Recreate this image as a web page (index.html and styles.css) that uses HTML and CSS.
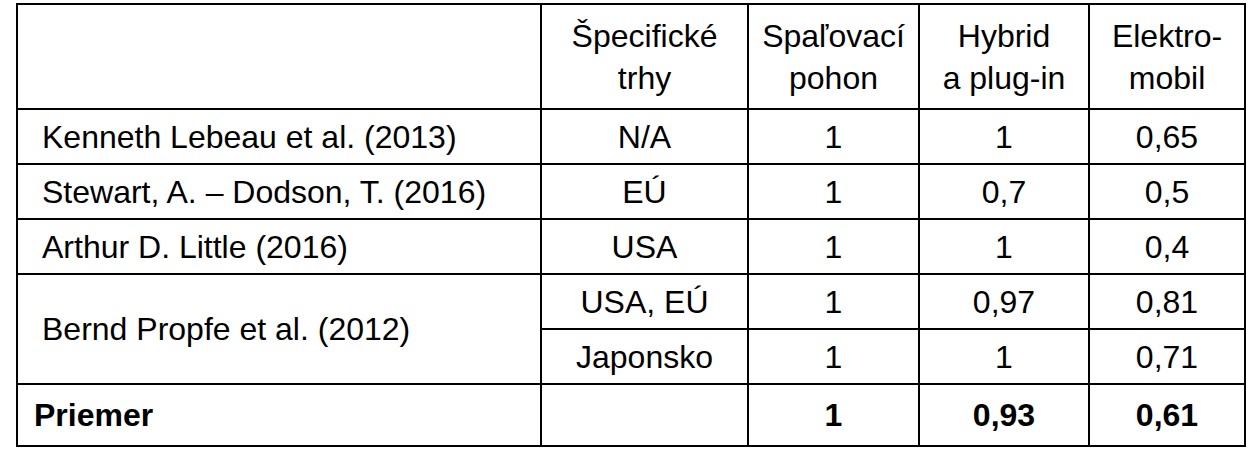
FILE: index.html
```html
<!DOCTYPE html>
<html lang="sk">
<head>
<meta charset="utf-8">
<title>Tabuľka</title>
<link rel="stylesheet" href="styles.css">
</head>
<body>
<table class="grid">
  <colgroup>
    <col class="c1"><col class="c2"><col class="c3"><col class="c4"><col class="c5">
  </colgroup>
  <thead>
    <tr class="head">
      <th></th>
      <th>Špecifické<br>trhy</th>
      <th>Spaľovací<br>pohon</th>
      <th>Hybrid<br>a plug-in</th>
      <th>Elektro-<br>mobil</th>
    </tr>
  </thead>
  <tbody>
    <tr class="row">
      <td class="name">Kenneth Lebeau et al. (2013)</td>
      <td>N/A</td><td>1</td><td>1</td><td>0,65</td>
    </tr>
    <tr class="row">
      <td class="name">Stewart, A. – Dodson, T. (2016)</td>
      <td>EÚ</td><td>1</td><td>0,7</td><td>0,5</td>
    </tr>
    <tr class="row">
      <td class="name">Arthur D. Little (2016)</td>
      <td>USA</td><td>1</td><td>1</td><td>0,4</td>
    </tr>
    <tr class="row">
      <td class="name" rowspan="2">Bernd Propfe et al. (2012)</td>
      <td>USA, EÚ</td><td>1</td><td>0,97</td><td>0,81</td>
    </tr>
    <tr class="row">
      <td>Japonsko</td><td>1</td><td>1</td><td>0,71</td>
    </tr>
    <tr class="total">
      <td class="name strong">Priemer</td>
      <td></td><td>1</td><td>0,93</td><td>0,61</td>
    </tr>
  </tbody>
</table>
</body>
</html>
```
FILE: styles.css
```css
html, body {
  margin: 0;
  padding: 0;
  background: #fff;
}
body {
  padding: 3px 0 0 16px;
}
.grid {
  border-collapse: collapse;
  table-layout: fixed;
  font-family: "Liberation Sans", Arial, sans-serif;
  font-size: 32px;
  color: #000;
}
.c1 { width: 524px; }
.c2 { width: 207px; }
.c3 { width: 171px; }
.c4 { width: 170px; }
.c5 { width: 156px; }
.grid th, .grid td {
  border: 2px solid #000;
  padding: 0;
  text-align: center;
  vertical-align: middle;
  font-weight: normal;
  line-height: 42px;
}
.head { height: 105px; }
.row { height: 55px; }
.total { height: 62px; }
.grid td.name {
  text-align: left;
  padding-left: 24px;
}
.grid td.strong {
  padding-left: 16px;
}
.total td {
  font-weight: bold;
}
```
